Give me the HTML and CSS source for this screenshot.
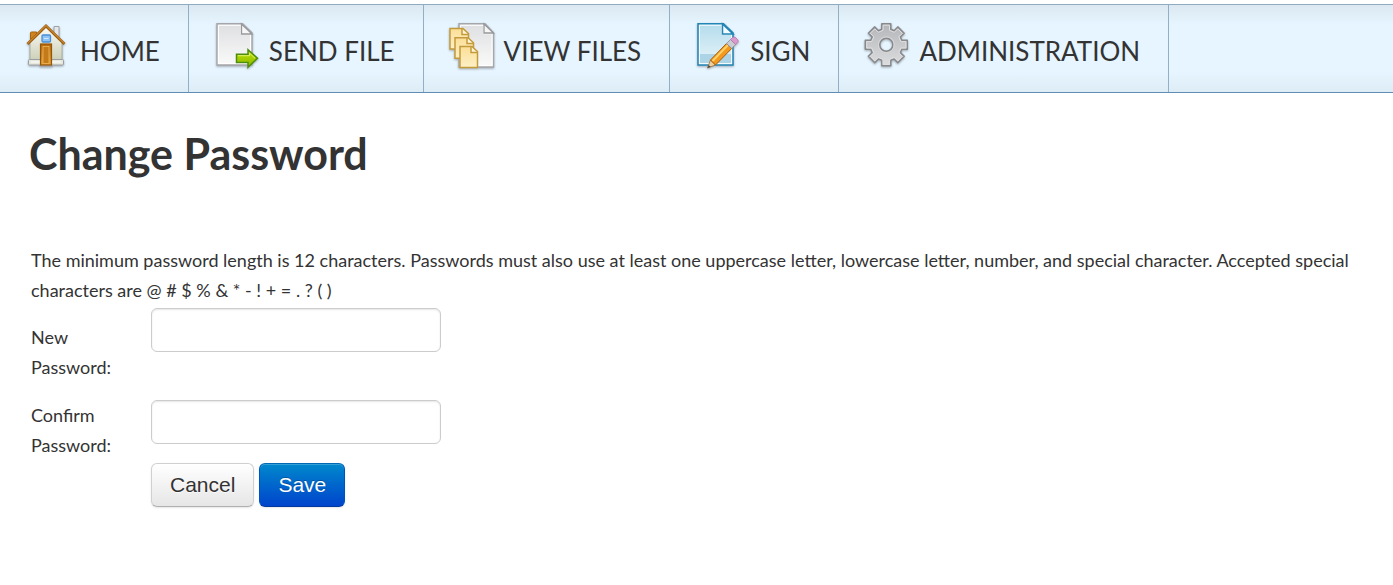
FILE: index.html
```html
<!DOCTYPE html>
<html lang="en">
<head>
<meta charset="utf-8">
<title>Change Password</title>
<link rel="stylesheet" href="styles.css">
</head>
<body>
<nav class="nav" aria-label="Main">
  <a class="tab" href="#home">
    <svg class="icon" viewBox="0 0 48 48" aria-hidden="true">
      <defs>
        <linearGradient id="wall" x2="0" y2="1"><stop stop-color="#fbfbf6"/><stop offset="1" stop-color="#cdd0b8"/></linearGradient>
        <linearGradient id="door" x2="0" y2="1"><stop stop-color="#b9690f"/><stop offset="1" stop-color="#e0a03a"/></linearGradient>
        <linearGradient id="paper" x2="0" y2="1"><stop stop-color="#dedfe1"/><stop offset="1" stop-color="#fafafa"/></linearGradient>
        <linearGradient id="yellow" x2="0" y2="1"><stop stop-color="#fbdf97"/><stop offset="1" stop-color="#fdf0c6"/></linearGradient>
        <linearGradient id="green" x2="0" y2="1"><stop stop-color="#c4e200"/><stop offset="1" stop-color="#86b800"/></linearGradient>
        <linearGradient id="sky" x2="0" y2="1"><stop stop-color="#b4dcec"/><stop offset="1" stop-color="#e8f5fa"/></linearGradient>
        <linearGradient id="steel" x2="0" y2="1"><stop stop-color="#b4b5b8"/><stop offset="1" stop-color="#dcdddf"/></linearGradient>
      </defs>
      <path d="M6.500 17V11q0-1 1-1h5v5z" fill="#cf8420" stroke="#a8640f"/>
      <path d="M30 16V4.500h5v14z" fill="#e5e6e8" stroke="#9fa2a8"/>
      <path d="M6 20 22 5l16 15v18H6z" fill="url(#wall)" stroke="#aaad9f"/>
      <rect x="4.500" y="37.500" width="35" height="5.500" rx="1" fill="#e6e7dd" stroke="#9b9ea2"/>
      <path d="M7 40h30" stroke="#fff"/>
      <path d="M3.500 22 22 4l18.500 18" fill="none" stroke="#995a12" stroke-width="2.800"/>
      <path d="M3.500 21.500 22 3.500l18.500 18" fill="none" stroke="#c9852a" stroke-width="1.200"/>
      <rect x="18" y="13" width="8.500" height="7" rx="1" fill="#8ec3f7" stroke="#4a8fd8" stroke-width="1.300"/>
      <path d="M20 16.500h4.500" stroke="#d3e8ff"/>
      <rect x="15.500" y="43" width="13" height="2" fill="#a5a8ae"/>
      <rect x="16.500" y="22" width="11" height="21" fill="url(#door)" stroke="#955509" stroke-width="1.200"/>
      <rect x="19" y="24.500" width="6" height="17" fill="#c47a18" stroke="#edb659" stroke-width=".8"/>
    </svg>
    <span>HOME</span>
  </a>
  <a class="tab" href="#send">
    <svg class="icon" viewBox="0 0 48 48" aria-hidden="true">
      <path d="M4 1.800h25.500l9.500 9V43H4z" fill="url(#paper)" stroke="#a6a7aa" stroke-width="1.400"/>
      <path d="M5.500 3.300h22.500v9h9.500V41.500H5.500z" fill="none" stroke="#fff" stroke-width="1"/>
      <path d="M28.500 2v10H39z" fill="#f7f7f7" stroke="#97989b" stroke-width="1.300"/>
      <path d="M23.500 32.200H35V27.700l9.500 8.600-9.500 9v-4.800H23.500z" fill="url(#green)" stroke="#4f8d10" stroke-width="1.500"/>
      <path d="M25 33.700h11.500v-2.500l5.500 5" fill="none" stroke="#dcf26a"/>
    </svg>
    <span>SEND FILE</span>
  </a>
  <a class="tab" href="#view">
    <svg class="icon" viewBox="0 0 48 48" aria-hidden="true">
      <path d="M11 1.800h26l8.500 9V45H11z" fill="url(#paper)" stroke="#a6a7aa" stroke-width="1.400"/>
      <path d="M12.500 3.300h23v8.500h8.500V43.500H12.500z" fill="none" stroke="#fff"/>
      <path d="M36 2v9h9.500z" fill="#f7f7f7" stroke="#97989b" stroke-width="1.300"/>
      <g fill="url(#yellow)" stroke="#c39a3c" stroke-width="1.500">
        <path d="M2 6.500h13l5.500 5v15.500H2z"/><path d="M14 7v5.500h6" fill="#fff6d8"/>
        <path d="M7 15.800h13l5.500 5v15.500H7z"/><path d="M19 16v5.500h6" fill="#fff6d8"/>
        <path d="M12 24.500h12l5.500 5v16H12z"/><path d="M23 25v5.500h6" fill="#fff6d8"/>
      </g>
    </svg>
    <span>VIEW FILES</span>
  </a>
  <a class="tab" href="#sign">
    <svg class="icon" viewBox="0 0 48 48" aria-hidden="true">
      <path d="M4 1.800h25.500l9.500 9V43H4z" fill="url(#sky)" stroke="#2385b5" stroke-width="1.500"/>
      <path d="M5.500 32h32v9.500h-32z" fill="#acd4e6"/>
      <path d="M5.500 3.300h22.500v9h9.500V41.500H5.500z" fill="none" stroke="#f4fbff"/>
      <path d="M28.500 2v10H39z" fill="#f4fbff" stroke="#2385b5" stroke-width="1.500"/>
      <path d="m13.500 46 3-8 5 5z" fill="#edcf9e" stroke="#947143" stroke-width=".8"/>
      <path d="m13.500 46 1.200-3 2 1.800z" fill="#444"/>
      <path d="m16.500 38 16-16.500 5.200 5L21.500 43z" fill="#f39a1e" stroke="#a65c0c"/>
      <path d="m18.500 39 15.500-16" stroke="#ffd36a" stroke-width="1.800"/>
      <path d="m32.500 21.500 4-4 5.200 5-4 4z" fill="#c9ccd3" stroke="#858a94" stroke-width=".8"/>
      <path d="m36.500 17.500 2-2q1.500-1 3 0l2.200 2.200q1.200 1.500 0 2.800l-2 2z" fill="#dc99ce" stroke="#b475a8" stroke-width=".8"/>
    </svg>
    <span>SIGN</span>
  </a>
  <a class="tab" href="#administration">
    <svg class="icon" viewBox="0 0 48 48" aria-hidden="true">
      <g transform="translate(23.300 22.800)" stroke-linejoin="round">
        <path fill-rule="evenodd" fill="url(#steel)" stroke="#88898c" stroke-width="1.500" d="M-4.500-15.500-4.500-21H4.500V-15.500L7.800-14.100 11.500-17.900 17.900-11.500 14.100-7.800 15.500-4.500H21V4.500H15.500L14.100 7.800 17.900 11.500 11.500 17.900 7.800 14.100 4.500 15.500V21H-4.500V15.500L-7.800 14.100-11.500 17.900-17.900 11.500-14.100 7.800-15.500 4.500H-21V-4.500H-15.500L-14.100-7.800-17.900-11.500-11.500-17.900-7.800-14.100ZM0-6.500A6.500 6.500 0 1 0 0 6.500 6.500 6.500 0 1 0 0-6.500Z"/>
        <path fill="none" stroke="#dedee0" stroke-width="1" d="M-3.200-14.500-3.200-19.600H3.200V-14.500L8-12.500 11.500-16 16-11.500 12.500-8 14.500-3.200H19.600V3.200H14.500L12.500 8 16 11.500 11.500 16 8 12.500 3.200 14.500V19.600H-3.200V14.500L-8 12.500-11.500 16-16 11.500-12.500 8-14.500 3.200H-19.600V-3.200H-14.500L-12.500-8-16-11.500-11.500-16-8-12.500Z"/>
        <circle r="8" fill="none" stroke="#d8d8da"/>
      </g>
    </svg>
    <span>ADMINISTRATION</span>
  </a>
</nav>
<main class="page">
  <h1 class="title">Change Password</h1>
  <p class="rules">The minimum password length is 12 characters. Passwords must also use at least one uppercase letter, lowercase letter, number, and special character. Accepted special characters are @ # $ % &amp; * - ! + = . ? ( )</p>
  <form class="form">
    <label class="label label-first" for="new-password">New Password:</label>
    <input class="input" id="new-password" type="password">
    <label class="label" for="confirm-password">Confirm Password:</label>
    <input class="input" id="confirm-password" type="password">
    <div class="actions">
      <button class="button" type="button">Cancel</button>
      <button class="button button-primary" type="submit">Save</button>
    </div>
  </form>
</main>
</body>
</html>
```
FILE: styles.css
```css
* {
  box-sizing: border-box;
}

body {
  margin: 0;
  padding-top: 4px;
  background: #fff;
  color: #333;
  font-family: Lato, sans-serif;
  font-size: 18px;
  line-height: 30px;
}

.nav {
  display: flex;
  border-top: 1px solid #8fabc1;
  border-bottom: 1px solid #5f8db4;
  background: linear-gradient(#dce8f1, #e6f5ff 20px, #e6f5ff 66px, #deecf6);
}

.tab {
  display: flex;
  align-items: flex-start;
  gap: 8px;
  padding: 17px 28px 17px 24px;
  border-right: 1px solid #93afc4;
  color: #333;
  font-size: 26px;
  line-height: 48px;
  text-decoration: none;
  white-space: nowrap;
}

.tab span {
  padding-top: 5px;
}

.icon {
  flex: none;
  width: 48px;
  height: 48px;
  filter: drop-shadow(0 1px 1px rgba(0, 0, 0, 0.3));
}

.page {
  padding: 31px;
}

.title {
  margin: 0 0 61px -2px;
  font-size: 43px;
  line-height: 60px;
}

.rules {
  margin: 0 0 3px;
}

.form {
  display: grid;
  grid-template-columns: 90px 290px;
  column-gap: 30px;
  align-items: start;
}

.label {
  margin-bottom: 3px;
}

.label-first {
  margin-bottom: 18px;
  padding-top: 14px;
}

.input {
  width: 100%;
  height: 44px;
  padding: 6px 8px;
  border: 1px solid #ccc;
  border-radius: 6px;
  background: #fff;
  box-shadow: inset 0 1px 2px rgba(0, 0, 0, 0.1);
  color: #333;
  font: inherit;
}

.actions {
  display: flex;
  grid-column: 2;
  gap: 5px;
}

.button {
  padding: 6px 18px;
  border: 1px solid #d0d0d0;
  border-bottom-color: #b0b0b0;
  border-radius: 6px;
  background: linear-gradient(#fff, #e6e6e6);
  box-shadow: inset 0 1px 0 rgba(255, 255, 255, 0.2), 0 1px 2px rgba(0, 0, 0, 0.1);
  color: #333;
  font-family: "Liberation Sans", sans-serif;
  font-size: 21px;
  line-height: 30px;
  text-shadow: 0 1px 1px rgba(255, 255, 255, 0.75);
}

.button-primary {
  border-color: #0069b5 #0052c0 #003a9e;
  background: linear-gradient(#08c, #04c);
  color: #fff;
  text-shadow: 0 -1px 0 rgba(0, 0, 0, 0.25);
}
```
